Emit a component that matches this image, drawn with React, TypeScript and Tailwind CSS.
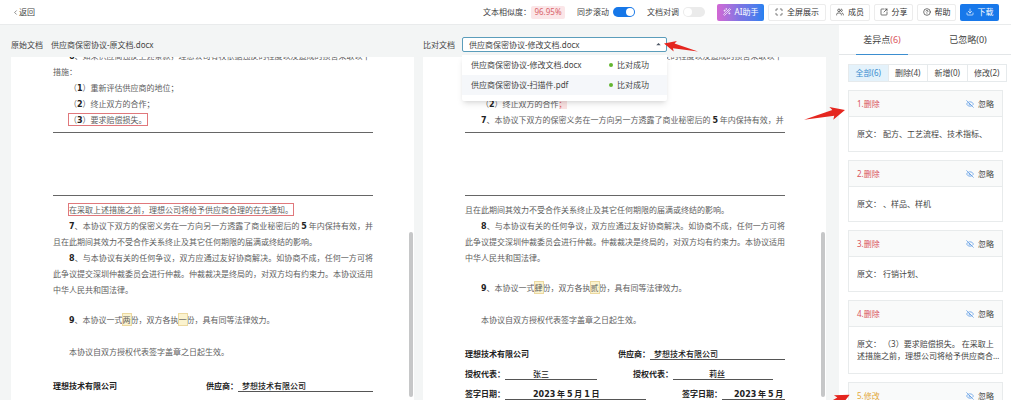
import type { ReactNode } from "react";
import { ChevronLeft, CircleHelp, Download, EyeOff, Maximize, SquareArrowOutUpRight, Users, WandSparkles } from "lucide-react";

const uiFont = "font-['Noto_Sans','Noto_Sans_CJK_SC',sans-serif]";

function Switch({ label, on }: { label: string; on: boolean }) {
  return (
    <label className="flex items-center gap-1 whitespace-nowrap">
      {label}
      <input type="checkbox" role="switch" defaultChecked={on} className="peer sr-only" />
      <span className="flex h-2.5 w-[22px] rounded-full bg-[#ebebeb] p-px peer-checked:justify-end peer-checked:bg-[#1677e8]">
        <span className="size-2 rounded-full bg-white" />
      </span>
    </label>
  );
}

function ToolButton({ icon, children, look }: { icon: ReactNode; children: ReactNode; look: string }) {
  return (
    <button type="button" className={`flex h-[17px] items-center justify-center gap-1 whitespace-nowrap rounded-xs ${look}`}>
      {icon}
      {children}
    </button>
  );
}

const plain = "border border-[#ececec] bg-white text-[#333]";

function Toolbar() {
  return (
    <header className="flex h-[25px] shrink-0 items-center justify-between border-b border-[#e9ebec] bg-white px-3">
      <a href="#back" className="flex items-center">
        <ChevronLeft size={7} />
        返回
      </a>
      <div className="flex items-center">
        <span className="whitespace-nowrap">文本相似度：</span>
        <span className="flex h-[13px] w-[34px] items-center justify-center rounded-xs bg-[#fbe6e8] text-[#d9636a]">96.95%</span>
        <div className="ml-3 flex items-center gap-3">
          <Switch label="同步滚动" on={true} />
          <Switch label="文档对调" on={false} />
        </div>
        <div className="ml-3 flex items-center gap-1">
          <ToolButton icon={<WandSparkles size={8} />} look="w-[47px] bg-linear-to-r from-[#d267d4] via-[#7a74e4] to-[#2380f0] text-white">AI助手</ToolButton>
          <ToolButton icon={<Maximize size={8} />} look={`w-[58px] ${plain}`}>全屏展示</ToolButton>
          <ToolButton icon={<Users size={8} />} look={`w-10 ${plain}`}>成员</ToolButton>
          <ToolButton icon={<SquareArrowOutUpRight size={8} />} look={`w-[39px] ${plain}`}>分享</ToolButton>
          <ToolButton icon={<CircleHelp size={8} />} look={`w-[39px] ${plain}`}>帮助</ToolButton>
          <ToolButton icon={<Download size={8} />} look="w-[39px] bg-[#1878ea] text-white">下载</ToolButton>
        </div>
      </div>
    </header>
  );
}

function Num({ children }: { children: ReactNode }) {
  return <b className="font-['DejaVu_Sans',sans-serif] font-bold leading-none text-[#222]">{children}</b>;
}

function Deleted({ children }: { children: ReactNode }) {
  return <mark className="bg-transparent text-inherit outline outline-[#e0787c]">{children}</mark>;
}

function Changed({ children }: { children: ReactNode }) {
  return <mark className="bg-[#fbf3cf] text-inherit outline outline-[#ecd9a0]">{children}</mark>;
}

function Blank({ width, children }: { width: string; children: ReactNode }) {
  return <span className={`h-3 border-b border-[#555] ${width}`}>{children}</span>;
}

function Page({ name, children }: { name: string; children: ReactNode }) {
  return (
    <section aria-label={name} className="flex min-w-0 flex-1 overflow-hidden bg-white">
      <div className="mx-auto -mt-[9px] w-80 text-justify font-['Noto_Sans_CJK_SC',sans-serif] leading-4 text-[#606060]">{children}</div>
      <div className="-ml-1.5 mr-px mt-[175px] h-[165px] w-1 shrink-0 rounded-full bg-[#c6c7c8]" />
    </section>
  );
}

function PageBreak() {
  return <div className="mb-1.5 mt-1 h-16 border-y border-[#666]" />;
}

function Opening() {
  return (
    <>
      <p className="whitespace-nowrap indent-4"><Num>6</Num>、如果供应商违反上述条款，理想公司有权依据违反的程度以及造成的损害采取以下</p>
      <p>措施：</p>
      <p className="indent-4">（<Num>1</Num>）重新评估供应商的地位；</p>
    </>
  );
}

function Clause7() {
  return <><Num>7</Num>、本协议下双方的保密义务在一方向另一方透露了商业秘密后的 <Num>5</Num> 年内保持有效，并</>;
}

function Clause8() {
  return (
    <p className="indent-4">
      <Num>8</Num>、与本协议有关的任何争议，双方应通过友好协商解决。如协商不成，任何一方可将此争议提交深圳仲裁委员会进行仲裁。仲裁裁决是终局的，对双方均有约束力。本协议适用中华人民共和国法律。
    </p>
  );
}

function Closing({ copies, each }: { copies: string; each: string }) {
  return (
    <>
      <p className="mt-3.5 indent-4">
        <Num>9</Num>、本协议一式<Changed>{copies}</Changed>份，双方各执<Changed>{each}</Changed>份，具有同等法律效力。
      </p>
      <p className="mt-4 indent-4">本协议自双方授权代表签字盖章之日起生效。</p>
      <div className="mt-4 flex flex-col gap-2 whitespace-pre font-bold leading-3 text-[#222]">
        <div className="flex justify-between pt-1">
          <span>理想技术有限公司</span>
          <div className="flex">供应商：<Blank width="w-[135px] pl-1 font-medium">梦想技术有限公司</Blank></div>
        </div>
        <div className="flex">
          授权代表：<Blank width="w-[92px] pl-7 font-medium">张三</Blank>
          <span className="ml-9">授权代表：</span><Blank width="w-[100px] pl-9 font-medium">莉丝</Blank>
        </div>
        <div className="flex">
          签字日期：<Blank width="w-[141px] pl-7"><Num>2023</Num> 年 <Num>5</Num> 月 <Num>1</Num> 日</Blank>
          <span className="ml-9">签字日期：</span><Blank width="w-[63px] pl-3"><Num>2023</Num> 年 <Num>5</Num> 月</Blank>
        </div>
      </div>
    </>
  );
}

const candidates = [
  { name: "供应商保密协议-修改文档.docx", look: "bg-white" },
  { name: "供应商保密协议-扫描件.pdf", look: "bg-[#f5f7fa]" },
];

function Arrow({ look }: { look: string }) {
  return (
    <svg viewBox="0 0 42 14" className={`pointer-events-none absolute z-20 ${look}`} aria-hidden="true">
      <path d="M42 3 26 0l3 3L0 13 31 9l-1 4Z" fill="#e5261f" />
    </svg>
  );
}

function FilePicker() {
  return (
    <div className="relative w-[205px]">
      <select id="compare" className="block h-[15px] w-full appearance-none rounded-xs border border-[#5b9dbb] bg-white pl-1.5 text-[#444] outline-none">
        <option>供应商保密协议-修改文档.docx</option>
      </select>
      <svg viewBox="0 0 6 4" className="pointer-events-none absolute right-1.5 top-1.5 h-[3px] w-[5px]" aria-hidden="true"><path d="M3 0 6 3H0Z" fill="#4b5563" /></svg>
      <ul className="absolute left-0 top-[18px] z-10 w-full rounded-xs bg-white pb-1.5 shadow-md">
        {candidates.map((c) => (
          <li key={c.name}>
            <button type="button" className={`flex h-5 w-full items-center pl-[9px] pr-[18px] text-[#444] ${c.look}`}>
              <span>{c.name}</span>
              <span className="ml-auto mr-1 size-1 rounded-full bg-[#62b52f]" />
              比对成功
            </button>
          </li>
        ))}
      </ul>
      <Arrow look="-right-[31px] top-1 w-[34px] -scale-x-100" />
    </div>
  );
}

function Documents() {
  return (
    <main className="flex min-w-0 flex-1 flex-col pl-[11px] pr-[13px]">
      <div className="flex h-8 shrink-0 gap-[9px] pt-3">
        <div className="flex h-[15px] flex-1 items-center gap-2">
          <span>原始文档</span>
          <span>供应商保密协议-原文档.docx</span>
        </div>
        <div className="flex h-[15px] flex-1 items-center gap-[7px]">
          <label htmlFor="compare" className="whitespace-nowrap">比对文档</label>
          <FilePicker />
        </div>
      </div>
      <div className="flex min-h-0 flex-1 gap-[9px]">
        <Page name="原始文档">
          <Opening />
          <p className="indent-4">（<Num>2</Num>）终止双方的合作；</p>
          <p className="ml-4"><Deleted>（<Num>3</Num>）要求赔偿损失。</Deleted></p>
          <PageBreak />
          <p className="ml-4"><Deleted>在采取上述措施之前，理想公司将给予供应商合理的在先通知。</Deleted></p>
          <p className="indent-4"><Clause7 />且在此期间其效力不受合作关系终止及其它任何期限的届满或终结的影响。</p>
          <Clause8 />
          <Closing copies="两" each="一" />
        </Page>
        <Page name="比对文档">
          <Opening />
          <p className="indent-4">（<Num>2</Num>）终止双方的合作<span className="bg-[#fbe3e3] text-[#d9636a]">；</span></p>
          <p className="indent-4"><Clause7 /></p>
          <PageBreak />
          <p>且在此期间其效力不受合作关系终止及其它任何期限的届满或终结的影响。</p>
          <Clause8 />
          <Closing copies="肆" each="贰" />
        </Page>
      </div>
    </main>
  );
}

const filters = ["全部(6)", "删除(4)", "新增(0)", "修改(2)"];

const differences = [
  { title: "1.删除", text: "配方、工艺流程、技术指标、", tone: "text-[#d9545c]" },
  { title: "2.删除", text: "、样品、样机", tone: "text-[#d9545c]" },
  { title: "3.删除", text: "行销计划、", tone: "text-[#d9545c]" },
  { title: "4.删除", text: "（3）要求赔偿损失。 在采取上述措施之前，理想公司将给予供应商合理的在先通知。", tone: "text-[#d9545c]" },
  { title: "5.修改", text: "两", tone: "text-[#e3a93c]" },
];

function Sidebar() {
  return (
    <aside className="relative flex w-[172px] shrink-0 flex-col bg-white">
      <nav className="flex h-[30px] shrink-0 border-b border-[#e3e6e8] px-[17px] text-[9px]">
        <button type="button" className="-mb-px w-[52px] border-b border-[#3b8ed0]">差异点<span className="text-[#d9545c]">(6)</span></button>
        <button type="button" className="-mb-px ml-auto w-[52px]">已忽略(0)</button>
      </nav>
      <div className="ml-[9px] mr-1 mt-[9px] flex h-[18px] shrink-0 border border-[#e6eaec]">
        {filters.map((f, i) => (
          <button key={f} type="button" className={`flex-1 ${i === 0 ? "bg-[#e4f2fb] text-[#3b8ed0]" : "border-l border-[#e6eaec]"}`}>{f}</button>
        ))}
      </div>
      <div className="ml-[9px] mr-2 mt-2 flex min-h-0 flex-1 flex-col gap-2 overflow-hidden">
        {differences.map((d) => (
          <article key={d.title} className="shrink-0 border border-[#e8ebec]">
            <div className="flex h-[26px] items-center justify-between border-b border-[#e8ebec] bg-[#f9fafa] px-2">
              <h3 className={d.tone}>{d.title}</h3>
              <button type="button" className="flex items-center gap-1"><EyeOff size={8} className="text-[#4a90e2]" />忽略</button>
            </div>
            <div className="py-[11px] pl-2 pr-0.5">
              <p className="line-clamp-2 leading-3">原文： {d.text}</p>
            </div>
          </article>
        ))}
      </div>
      <Arrow look="-left-[35px] top-[82px] w-[41px]" />
      <Arrow look="-left-[29px] top-[371px] w-[41px] -rotate-12" />
    </aside>
  );
}

export default function App() {
  return (
    <div lang="zh-CN" className={`flex h-screen flex-col overflow-hidden bg-[#f3f5f5] text-[8px] leading-3 text-[#444] ${uiFont}`}>
      <Toolbar />
      <div className="flex min-h-0 flex-1">
        <Documents />
        <Sidebar />
      </div>
    </div>
  );
}
